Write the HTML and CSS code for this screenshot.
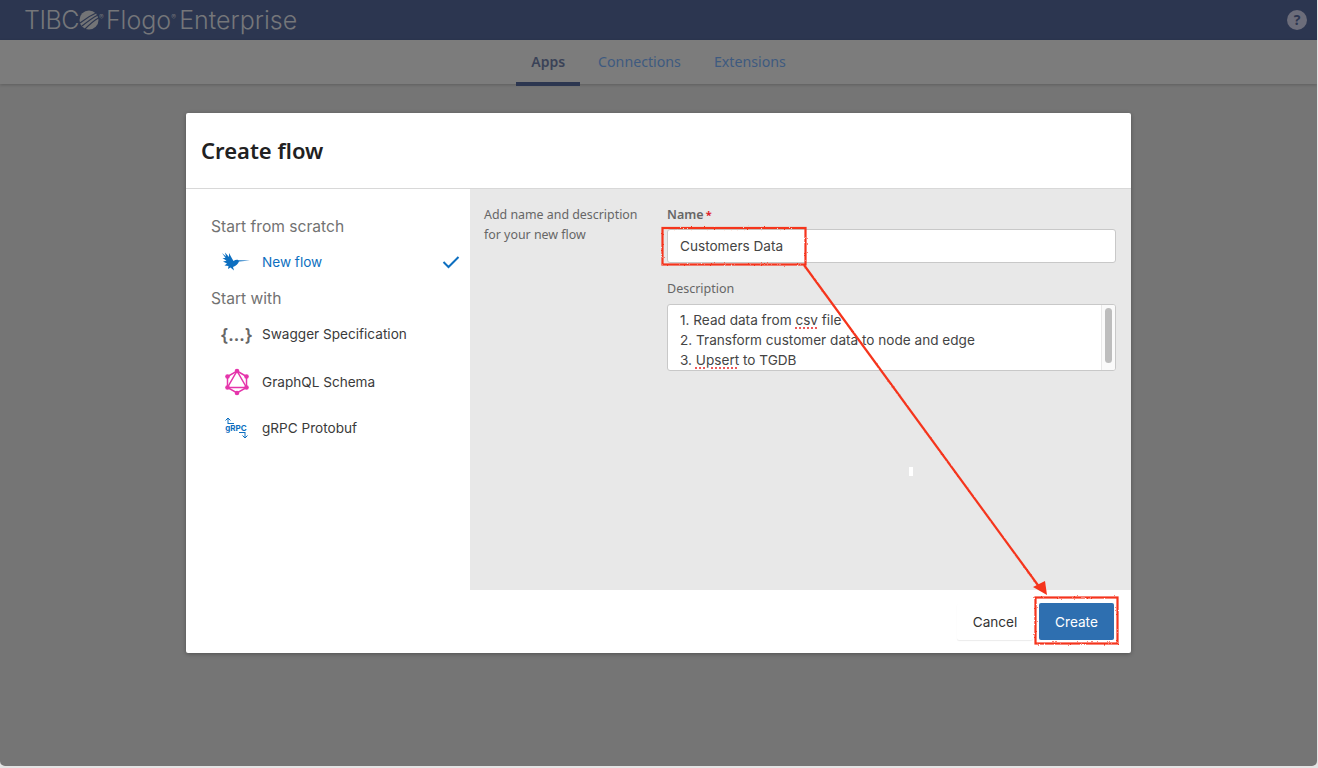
FILE: index.html
```html
<!DOCTYPE html>
<html lang="en">
<head>
    <meta charset="UTF-8">
    <title>Create flow</title>
    <link rel="stylesheet" href="styles.css">
</head>
<body>

<div class="window">
    <!-- Top bar -->
    <header class="topbar">
        <div class="logo">
            <span class="logo-tibco">TIBC</span>
            <svg class="logo-ball" width="20" height="20" viewBox="0 0 20 20">
                <circle cx="10" cy="10" r="9.5" fill="#737476"/>
                <path d="M1 13C6 9 12 5 19 2M3 16C8 12 13 8 19 5M6 19C10 15 14 11 19.5 8" stroke="#2c3650" stroke-width="1.2" fill="none"/>
            </svg>
            <sup class="logo-reg">®</sup>
            <span class="logo-flogo">Flogo</span>
            <sup class="logo-reg">®</sup>
            <span class="logo-enterprise">Enterprise</span>
        </div>
        <div class="help">?</div>
    </header>

    <!-- Tabs -->
    <nav class="tabs">
        <a class="tab tab-active">Apps</a>
        <a class="tab">Connections</a>
        <a class="tab">Extensions</a>
    </nav>

    <main class="content">
        <div class="modal">
            <div class="modal-title"><h2>Create flow</h2></div>

            <div class="modal-body">
                <!-- Flow type list -->
                <aside class="types">
                    <h4 class="types-head">Start from scratch</h4>
                    <div class="type type-selected">
                        <svg class="type-icon" width="30" height="20" viewBox="0 0 30 20">
                            <path d="M1 1L5 4.5L4 0.5L8 5L8 1L11 6.5L12.5 9C14 8 16 7.5 17.5 8.2L29 8.6L18 9.6C17 12 15 14 12 15L13 18.5L9.5 15.5L7 17L7.5 14L3.5 13.5L6 11.5L2 9.5L5.5 8.8L1.5 6L4.5 6Z" fill="#0d6fc0"/>
                        </svg>
                        <span>New flow</span>
                        <svg class="type-check" width="18" height="14" viewBox="0 0 18 14">
                            <path d="M1.5 7L6.5 12L16.5 2" stroke="#0d6fc0" stroke-width="2" fill="none"/>
                        </svg>
                    </div>
                    <h4 class="types-head">Start with</h4>
                    <div class="type">
                        <span class="type-icon type-braces">{...}</span>
                        <span>Swagger Specification</span>
                    </div>
                    <div class="type">
                        <svg class="type-icon" width="30" height="28" viewBox="0 0 30 28">
                            <g stroke="#e535ab" stroke-width="1.5" fill="none">
                                <path d="M16 3L25.5 8.5V19.5L16 25L6.5 19.5V8.5Z"/>
                                <path d="M16 3L25.5 19.5H6.5Z"/>
                            </g>
                            <g fill="#e535ab">
                                <circle cx="16" cy="3" r="2.3"/>
                                <circle cx="25.5" cy="8.5" r="2.3"/>
                                <circle cx="25.5" cy="19.5" r="2.3"/>
                                <circle cx="16" cy="25" r="2.3"/>
                                <circle cx="6.5" cy="19.5" r="2.3"/>
                                <circle cx="6.5" cy="8.5" r="2.3"/>
                            </g>
                        </svg>
                        <span>GraphQL Schema</span>
                    </div>
                    <div class="type type-grpc">
                        <span class="type-icon grpc-icon">
                            <svg class="grpc-arrow-up" width="9" height="7" viewBox="0 0 9 7"><path d="M3 7V1M0.5 3.5L3 1L5.5 3.5M3 6.5H9" stroke="#0d6fc0" fill="none"/></svg>
                            <span class="grpc-text">gRPC</span>
                            <svg class="grpc-arrow-down" width="9" height="7" viewBox="0 0 9 7"><path d="M6 0V6M3.5 3.5L6 6L8.5 3.5M0 0.5H6" stroke="#0d6fc0" fill="none"/></svg>
                        </span>
                        <span>gRPC Protobuf</span>
                    </div>
                </aside>

                <!-- Name and description -->
                <section class="details">
                    <p class="details-help">Add name and description for your new flow</p>
                    <div class="form">
                        <label class="label label-name">Name <span class="required">*</span></label>
                        <div class="input">Customers Data</div>
                        <label class="label label-desc">Description</label>
                        <div class="textarea">
                            <div class="textarea-text">
                                <div>1. Read data from <span class="typo">csv</span> file</div>
                                <div>2. Transform customer data to node and edge</div>
                                <div>3. <span class="typo">Upsert</span> to TGDB</div>
                            </div>
                            <div class="scrollbar"><div class="scrollbar-thumb"></div></div>
                        </div>
                    </div>
                </section>
            </div>

            <div class="modal-footer">
                <button class="btn btn-cancel">Cancel</button>
                <button class="btn btn-create">Create</button>
            </div>
        </div>
    </main>

    <!-- Red annotations drawn over the screenshot -->
    <svg class="marks" width="1317" height="766" viewBox="0 0 1317 766">
        <defs>
            <filter id="rough" x="-5%" y="-5%" width="110%" height="110%">
                <feTurbulence type="fractalNoise" baseFrequency="0.7" numOctaves="1" seed="3"/>
                <feDisplacementMap in="SourceGraphic" scale="2.5"/>
            </filter>
        </defs>
        <g filter="url(#rough)" fill="none" stroke="#f5341c" stroke-width="2.2">
            <rect x="662.5" y="228" width="143" height="36.5"/>
            <rect x="1035.5" y="597.5" width="82" height="46"/>
            <path d="M804 265L1040 588"/>
        </g>
        <path d="M1047 595L1033 587L1045 581Z" fill="#f5341c"/>
        <rect x="909" y="467" width="4" height="9" fill="#fff"/>
    </svg>
</div>

</body>
</html>
```

FILE: styles.css
```css
html, body {
    margin: 0;
    height: 100%;
}
body {
    background-color: #e4e4e4;
    font-family: Inter, "Noto Sans", sans-serif;
    overflow: hidden;
}
.window {
    position: relative;
    width: 1317px;
    height: 766px;
    display: flex;
    flex-direction: column;
    background-color: #757575;
    border-radius: 0 0 5px 5px;
    overflow: hidden;
}

/* top bar */
.topbar {
    height: 40px;
    flex: none;
    display: flex;
    align-items: center;
    justify-content: space-between;
    padding: 0 10px 0 24px;
    background-color: #2c3650;
}
.logo {
    display: flex;
    align-items: center;
    font-family: Inter, sans-serif;
    color: #75767a;
    font-size: 25px;
    font-weight: 300;
}
.logo-tibco {
    letter-spacing: -0.5px;
}
.logo-reg {
    font-size: 7px;
    line-height: 1;
    align-self: flex-start;
    margin-top: 9px;
    width: 7px;
}
.logo-enterprise {
    margin-left: 1px;
}
.help {
    width: 20px;
    height: 20px;
    border-radius: 50%;
    background-color: #6c6d7a;
    color: #2c3650;
    font-family: "Noto Sans", sans-serif;
    font-size: 14px;
    font-weight: 700;
    line-height: 20px;
    text-align: center;
}

/* tabs */
.tabs {
    height: 44px;
    flex: none;
    display: flex;
    justify-content: center;
    gap: 3px;
    background-color: #7c7c7c;
    box-shadow: 0 1px 3px rgba(0, 0, 0, 0.2);
    z-index: 1;
    font-family: "Noto Sans", sans-serif;
}
.tab {
    height: 42px;
    padding: 0 15px;
    font-size: 14.2px;
    line-height: 44px;
    color: #3e5a80;
}
.tab-active {
    height: 46px;
    box-sizing: border-box;
    color: #3a4257;
    font-weight: 600;
    font-size: 14px;
    border-bottom: 4px solid #2c3650;
}

/* modal */
.content {
    flex: 1;
    display: flex;
    justify-content: center;
    padding-top: 29px;
}
.modal {
    width: 945px;
    height: 540px;
    display: flex;
    flex-direction: column;
    background-color: #fff;
    border-radius: 2px;
    box-shadow: 0 1px 4px rgba(0, 0, 0, 0.3);
}
.modal-title {
    height: 73px;
    flex: none;
    display: flex;
    align-items: center;
    padding: 0 0 2px 15px;
    border-bottom: 1px solid #d8d8d8;
}
.modal-title h2 {
    margin: 0;
    font-family: "Noto Sans", sans-serif;
    font-size: 22px;
    font-weight: 600;
    color: #212121;
}
.modal-body {
    flex: 1;
    display: flex;
    min-height: 0;
}
.modal-footer {
    height: 63px;
    flex: none;
    box-sizing: border-box;
    display: flex;
    justify-content: flex-end;
    gap: 6px;
    padding: 13px 17px 0 0;
}

/* left list */
.types {
    width: 284px;
    flex: none;
    box-sizing: border-box;
    padding: 25px 10px 0 25px;
}
.types-head {
    box-sizing: border-box;
    height: 24px;
    margin: 0;
    padding-top: 2px;
    font-size: 15.6px;
    font-weight: 400;
    line-height: 22px;
    color: #727272;
}
.type {
    display: flex;
    align-items: center;
    height: 48px;
    font-size: 13.6px;
    color: #3a3a3a;
}
.type-selected {
    color: #0d6fc0;
}
.type-grpc {
    height: 44px;
}
.type-icon {
    flex: none;
    width: 30px;
    margin: 0 11px 0 10px;
}
.type-check {
    margin-left: auto;
}
.type-braces {
    font-family: "Noto Sans", sans-serif;
    font-size: 18px;
    font-weight: 600;
    color: #666;
    letter-spacing: 0.5px;
    white-space: nowrap;
}
.grpc-icon {
    display: flex;
    flex-direction: column;
    align-items: center;
    color: #0d6fc0;
}
.grpc-arrow-up {
    margin-right: 14px;
}
.grpc-arrow-down {
    margin-left: 14px;
}
.grpc-text {
    font-size: 8px;
    font-weight: 700;
    line-height: 8px;
}

/* right pane */
.details {
    flex: 1;
    display: flex;
    background-color: #e8e8e8;
}
.details-help {
    width: 160px;
    flex: none;
    margin: 0;
    padding: 16px 0 0 14px;
    font-family: "Noto Sans", sans-serif;
    font-size: 12.4px;
    line-height: 20px;
    color: #666;
}
.form {
    width: 449px;
    margin-left: 23px;
    padding-top: 16px;
}
.label {
    display: block;
    font-family: "Noto Sans", sans-serif;
    font-size: 12.5px;
    line-height: 20px;
    color: #666;
}
.label-name {
    font-weight: 600;
}
.required {
    margin-left: -1px;
    font-size: 11px;
    color: #e0202a;
    font-weight: 700;
}
.label-desc {
    margin-top: 16px;
}
.input {
    box-sizing: border-box;
    height: 34px;
    margin-top: 4px;
    padding-left: 12px;
    font-size: 13.6px;
    line-height: 32px;
    color: #444;
    background-color: #fff;
    border: 1px solid #c8c8c8;
    border-radius: 3px;
}
.textarea {
    box-sizing: border-box;
    height: 67px;
    margin-top: 5px;
    display: flex;
    font-size: 13.6px;
    line-height: 20px;
    color: #444;
    background-color: #fff;
    border: 1px solid #c8c8c8;
    border-radius: 3px;
    overflow: hidden;
}
.textarea-text {
    flex: 1;
    padding: 5px 0 0 12px;
}
.typo {
    text-decoration: underline dotted #ee5a5a 1.5px;
    text-underline-offset: 2px;
}
.scrollbar {
    width: 14px;
    flex: none;
    box-sizing: border-box;
    padding: 3px 3px 0 3px;
    background-color: #fafafa;
    border-left: 1px solid #e8e8e8;
}
.scrollbar-thumb {
    height: 55px;
    background-color: #bdbdbd;
    border-radius: 4px;
}

/* footer buttons */
.btn {
    height: 37px;
    padding: 0;
    border: none;
    border-radius: 2px;
    font-family: inherit;
    font-size: 13.6px;
}
.btn-cancel {
    width: 76px;
    color: #333;
    background-color: #fff;
    box-shadow: 0 1px 1px rgba(0, 0, 0, 0.08);
}
.btn-create {
    width: 75px;
    color: #fff;
    background-color: #2e6fb0;
}

/* annotations */
.marks {
    position: absolute;
    top: 0;
    left: 0;
    pointer-events: none;
}
```
